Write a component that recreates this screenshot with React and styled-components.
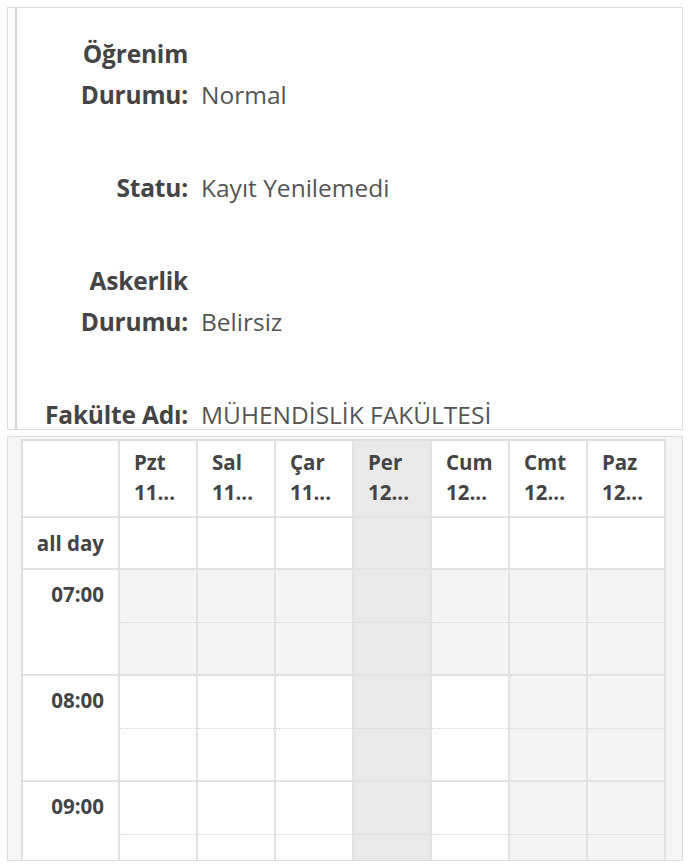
import React from 'react';
import styled, { createGlobalStyle } from 'styled-components';

const GlobalStyle = createGlobalStyle`
    body {
        margin: 0;
        background: #fff;
        font-family: "Open Sans", "Noto Sans", sans-serif;
    }
`;

const student = [
    { label: 'Öğrenim Durumu:', value: 'Normal' },
    { label: 'Statu:', value: 'Kayıt Yenilemedi' },
    { label: 'Askerlik Durumu:', value: 'Belirsiz' },
    { label: 'Fakülte Adı:', value: 'MÜHENDİSLİK FAKÜLTESİ' },
];

const days = [
    { name: 'Pzt', date: '11...', kind: 'work' },
    { name: 'Sal', date: '11...', kind: 'work' },
    { name: 'Çar', date: '11...', kind: 'work' },
    { name: 'Per', date: '12...', kind: 'today' },
    { name: 'Cum', date: '12...', kind: 'work' },
    { name: 'Cmt', date: '12...', kind: 'weekend' },
    { name: 'Paz', date: '12...', kind: 'weekend' },
];

const hours = [
    { time: '07:00', offHours: true },
    { time: '08:00', offHours: false },
    { time: '09:00', offHours: false },
];

const slotColor = (kind, offHours) => {
    if (kind === 'today') return '#e9e9e9';
    if (offHours || kind === 'weekend') return '#f4f4f4';
    return '#fff';
};

const App = () => {
    return (
        <>
            <GlobalStyle />
            <Page>
                <InfoCard>
                    <InfoList>
                        {student.map((item) => (
                            <InfoRow key={item.label}>
                                <Label>{item.label}</Label>
                                <Value>{item.value}</Value>
                            </InfoRow>
                        ))}
                    </InfoList>
                </InfoCard>

                <CalendarCard>
                    <Grid>
                        <HeadCell />
                        {days.map((d) => (
                            <HeadCell key={d.name} $bg={d.kind === 'today' ? '#e9e9e9' : '#fff'}>
                                <div>{d.name}</div>
                                <div>{d.date}</div>
                            </HeadCell>
                        ))}

                        <AxisCell $center>all day</AxisCell>
                        {days.map((d) => (
                            <AllDayCell key={d.name} $bg={d.kind === 'today' ? '#e9e9e9' : '#fff'} />
                        ))}

                        {hours.map((h) => (
                            <React.Fragment key={h.time}>
                                <AxisCell>{h.time}</AxisCell>
                                {days.map((d) => (
                                    <SlotCell key={d.name} $bg={slotColor(d.kind, h.offHours)}>
                                        <HalfSlot $dotted />
                                        <HalfSlot />
                                    </SlotCell>
                                ))}
                            </React.Fragment>
                        ))}
                    </Grid>
                </CalendarCard>
            </Page>
        </>
    );
};

const Page = styled.div`
    padding: 7px 7px 0 7px;
    display: flex;
    flex-direction: column;
    gap: 6px;
`;

const InfoCard = styled.div`
    height: 423px;
    box-sizing: border-box;
    border: 1px solid #dcdcdc;
    overflow: hidden;
`;

const InfoList = styled.div`
    margin-left: 7px;
    height: 100%;
    box-sizing: border-box;
    border-left: 2px solid #d4d4d4;
    padding-top: 25px;
    display: flex;
    flex-direction: column;
    gap: 52px;
`;

const InfoRow = styled.div`
    display: flex;
    align-items: flex-end;
    font-size: 24.5px;
    line-height: 41px;
`;

const Label = styled.div`
    width: 171px;
    flex-shrink: 0;
    text-align: right;
    font-weight: 700;
    color: #444;
    letter-spacing: -0.2px;
`;

const Value = styled.div`
    margin-left: 13px;
    color: #555;
`;

const CalendarCard = styled.div`
    height: 425px;
    box-sizing: border-box;
    border: 1px solid #dcdcdc;
    background: #f5f5f5;
    padding: 2px 16px 0 13px;
    overflow: hidden;
`;

const Grid = styled.div`
    display: grid;
    grid-template-columns: 97px repeat(7, 78px);
    border-top: 2px solid #dedede;
    border-left: 2px solid #dedede;
    background: #fff;
    font-weight: 700;
    color: #444;
    width: max-content;
`;

const Cell = styled.div`
    box-sizing: border-box;
    border-right: 2px solid #e2e2e2;
    border-bottom: 2px solid #e2e2e2;
    background: ${(p) => p.$bg || '#fff'};
`;

const HeadCell = styled(Cell)`
    height: 77px;
    padding: 6px 12px 0 14px;
    font-size: 20.5px;
    line-height: 30px;
    white-space: nowrap;
`;

const AxisCell = styled(Cell)`
    height: ${(p) => (p.$center ? '52px' : '106px')};
    padding: ${(p) => (p.$center ? '0 14px' : '9px 14px 0')};
    display: flex;
    align-items: ${(p) => (p.$center ? 'center' : 'flex-start')};
    justify-content: flex-end;
    font-size: 20.5px;
    line-height: 30px;
    white-space: nowrap;
`;

const AllDayCell = styled(Cell)`
    height: 52px;
`;

const SlotCell = styled(Cell)`
    height: 106px;
    display: flex;
    flex-direction: column;
`;

const HalfSlot = styled.div`
    flex: 1;
    border-bottom: ${(p) => (p.$dotted ? '1px dotted #d6d6d6' : 'none')};
`;

export default App;
